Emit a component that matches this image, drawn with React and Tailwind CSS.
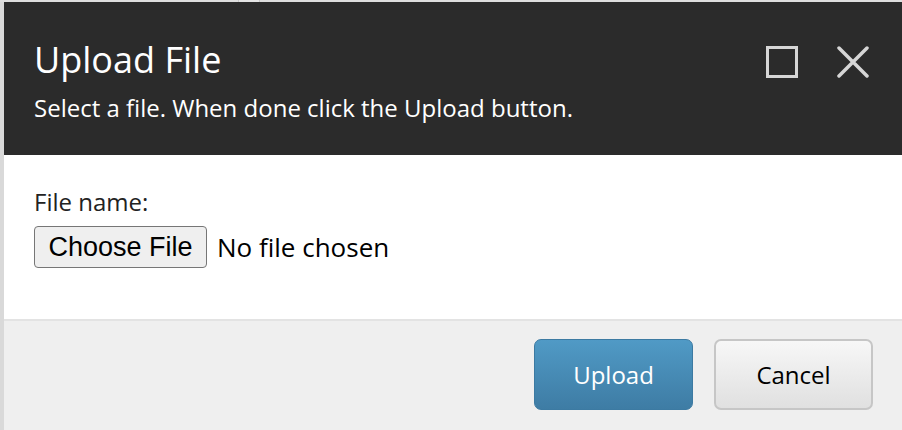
import React from "react";

export default function App() {
  return (
    <div className="w-[902px] h-[430px] bg-[#d9d9d9] flex flex-col overflow-hidden">
      <div className="h-[2px] shrink-0 flex">
        <div className="w-[238px] bg-[#dedede]" />
        <div className="w-[1px] bg-[#c8c8c8]" />
        <div className="w-[20px] bg-[#e4e4e4]" />
        <div className="w-[1px] bg-[#c8c8c8]" />
        <div className="flex-1 bg-[#dedede]" />
      </div>
      <div
        className="flex-1 ml-[4px] flex flex-col bg-white"
        style={{ fontFamily: '"Open Sans", "Noto Sans", sans-serif' }}
      >
        <div className="h-[153px] shrink-0 bg-[#2b2b2b] pl-[30px] pr-[33px] pt-[36px] flex justify-between">
          <div>
            <h1 className="text-[36px] leading-[44px] text-white">Upload File</h1>
            <p className="mt-[12px] text-[24px] leading-[28px] text-white">
              Select a file. When done click the Upload button.
            </p>
          </div>
          <div className="flex gap-[39px] pt-[8px]">
            <button className="w-[32px] h-[32px]">
              <svg width="32" height="32" viewBox="0 0 32 32">
                <rect x="1.5" y="1.5" width="29" height="29" fill="none" stroke="#d6d6d6" strokeWidth="3" />
              </svg>
            </button>
            <button className="w-[32px] h-[32px]">
              <svg width="32" height="32" viewBox="0 0 32 32">
                <path d="M2 2 L30 30 M30 2 L2 30" stroke="#d6d6d6" strokeWidth="3.5" strokeLinecap="round" />
              </svg>
            </button>
          </div>
        </div>
        <div className="h-[166px] shrink-0 pl-[30px] pt-[34px] border-b-2 border-[#e3e3e3]">
          <div className="text-[24px] leading-[26px] text-[#222]">File name:</div>
          <div className="mt-[11px] flex items-center">
            <button
              className="w-[173px] h-[42px] rounded-[4px] border border-[#767676] bg-[#efefef] text-[27px] text-black"
              style={{ fontFamily: '"Liberation Sans", Arial, sans-serif' }}
            >
              Choose File
            </button>
            <span className="ml-[10px] text-[26px] text-black">No file chosen</span>
          </div>
        </div>
        <div className="flex-1 bg-[#efefef] flex justify-end items-start pt-[18px] pr-[29px] gap-[21px]">
          <button className="w-[159px] h-[71px] rounded-[7px] border border-[#3c7aa2] bg-gradient-to-b from-[#509ac6] to-[#3e7ca4] text-white text-[24px]">
            Upload
          </button>
          <button className="w-[159px] h-[71px] rounded-[7px] border-2 border-[#c6c6c6] bg-gradient-to-b from-[#f7f7f7] to-[#e0e0e0] text-black text-[24px]">
            Cancel
          </button>
        </div>
      </div>
    </div>
  );
}
